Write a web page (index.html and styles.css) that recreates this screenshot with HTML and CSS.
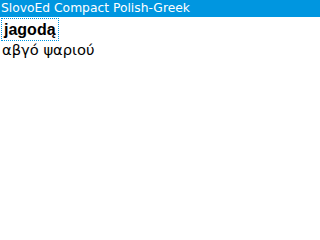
FILE: index.html
```html
<!DOCTYPE html>
<html>
<head>
<meta charset="utf-8">
<link rel="stylesheet" href="styles.css">
</head>
<body>
<div class="titlebar">SlovoEd Compact Polish-Greek</div>
<div class="content">
  <div class="word">jagodą</div>
  <div class="translation">αβγό ψαριού</div>
</div>
</body>
</html>
```
FILE: styles.css
```css
html, body {
  margin: 0;
  padding: 0;
  background: #ffffff;
  width: 320px;
  height: 240px;
  overflow: hidden;
}
body {
  font-family: "DejaVu Sans", "Liberation Sans", sans-serif;
  color: #000;
}
.titlebar {
  height: 17px;
  background: #0096e0;
  color: #ffffff;
  font-size: 12.3px;
  line-height: 17px;
  padding-left: 1px;
  white-space: nowrap;
}
.content {
  padding: 1px 0 0 1px;
  display: flex;
  flex-direction: column;
  align-items: flex-start;
}
.word {
  border: 1px dotted #0096e0;
  font-family: "Liberation Sans", "DejaVu Sans", sans-serif;
  font-weight: bold;
  font-size: 16px;
  line-height: 21px;
  padding: 0 2px;
}
.translation {
  font-size: 14.7px;
  line-height: 17px;
  padding-left: 1px;
}
```
